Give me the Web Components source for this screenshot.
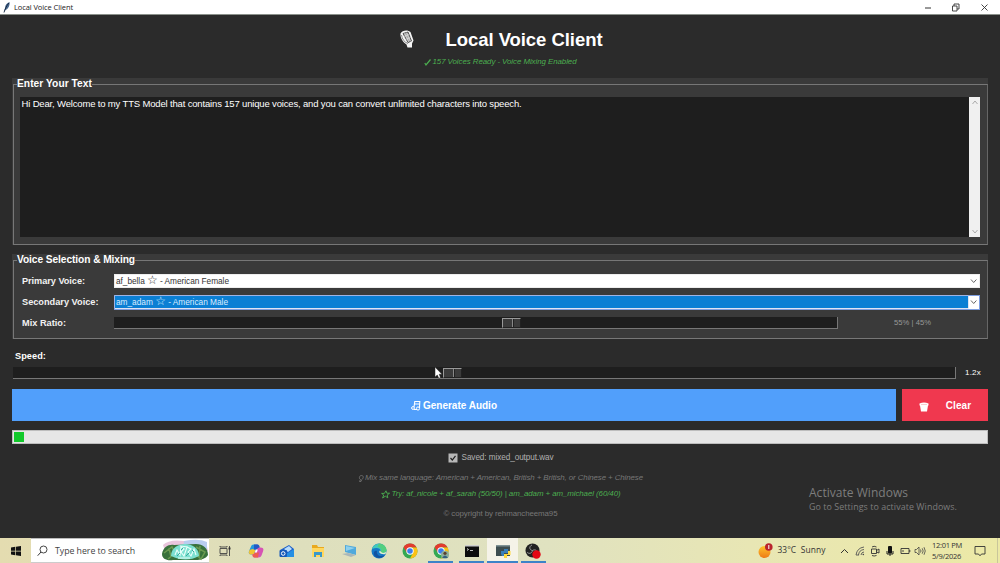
<!DOCTYPE html>
<html lang="en">
<head>
<meta charset="utf-8">
<title>Local Voice Client</title>
<style>
    body {
        margin: 0;
        width: 1000px;
        height: 563px;
        overflow: hidden;
        background: #2b2b2b;
        font-family: "Liberation Sans", Arial, sans-serif;
        font-size: 9.5px;
        color: #fff;
    }
</style>
</head>
<body>
<voice-app></voice-app>

<script>
const define = (name, html, setup) => {
    const template = document.createElement('template');
    template.innerHTML = html;
    window.customElements.define(name, class extends HTMLElement {
        constructor() {
            super();
            this.attachShadow({ mode: 'open' });
            this.shadowRoot.appendChild(template.content.cloneNode(true));
        }
        connectedCallback() {
            if (setup) setup(this, this.shadowRoot);
        }
    });
};

// one line of text, spaced out to the width in its "w" attribute
define('fit-text', `<style>
    :host { display: block; white-space: pre; flex: none; line-height: 1.2; }
    span { display: inline-block; }
</style><span><slot></slot></span>`, (el, root) => {
    const w = Number(el.getAttribute('w'));
    const span = root.querySelector('span');
    el.style.width = `${w}px`;
    const chars = Array.from(el.textContent).length;
    span.style.letterSpacing = `${(w - span.getBoundingClientRect().width) / chars}px`;
});

define('title-bar', `<style>
    :host { display: flex; align-items: center; height: 14px; background: #fff; border-bottom: 1px solid #8b918b; flex: none; }
    .feather { margin: 0 3px 0 2px; }
    fit-text { font: 7.5px/14px "Open Sans", sans-serif; color: #222; }
    .buttons { margin-left: auto; display: flex; }
    .buttons svg { width: 28.5px; height: 13px; }
    .buttons { margin-right: 1px; }
</style>
<svg class="feather" width="9" height="12" viewBox="0 0 9 12"><path d="M2 11 3 7C3 4 5 2 7.500 1 8 4 6.500 8 3.500 9Z" fill="#46678f"/><path d="M2 11.500C3 8 4.500 5 6.800 2" stroke="#15263c" stroke-width=".9" fill="none"/></svg>
<fit-text w="59">Local Voice Client</fit-text>
<div class="buttons">
<svg viewBox="0 0 28.5 13"><path d="M11 7h6" stroke="#333" fill="none"/></svg>
<svg viewBox="0 0 28.500 13"><path d="M10.500 5h4.500v5h-4.500zM12 5V3h5v5h-2" stroke="#333" stroke-width=".9" fill="none"/></svg>
<svg viewBox="0 0 28.5 13"><path d="m10.500 3.500 6 6m0-6-6 6" stroke="#333" stroke-width=".9" fill="none"/></svg>
</div>`);

define('app-header', `<style>
    :host { display: flex; flex-direction: column; align-items: center; height: 63px; flex: none; }
    .row { display: flex; align-items: center; height: 21px; margin-top: 13.500px; gap: 30px; padding-left: 1px; }
    .title { font-weight: bold; font-size: 18.500px; line-height: 21px; }
    .sub { display: flex; align-items: center; margin-top: 7.500px; gap: 2px; height: 10px; color: #4caf50; }
    .sub fit-text { font-style: italic; font-size: 7.9px; line-height: 10px; }
</style>
<div class="row">
<svg width="17" height="20" viewBox="0 0 17 20"><path d="M1.500 4.500C3 1 9 .5 11.500 3l3 8.500-1.500 3v4H8.500l-1-3C4 13.500 1 8.500 1.500 4.500Z" fill="#f5f5f5"/><path d="m4 4.500 5-1.500 3.500 9-3.500 1.500Z" fill="#aaa" stroke="#333" stroke-width=".8"/><path d="m5.500 4 4.200 9M7.500 3.500l4 9M5 7.500l5-2M6.500 10.500l5-2" stroke="#eee" stroke-width=".5"/><path d="M2.500 6C3 10 5.500 13.500 9 14.500" stroke="#555" stroke-width=".7" fill="none"/></svg>
<fit-text class="title" w="157">Local Voice Client</fit-text>
</div>
<div class="sub">
<svg width="7" height="9" viewBox="0 0 7 9"><path d="m.8 5 1.200 2L6.500 1.500" stroke="#4caf50" stroke-width="1.200" fill="none"/></svg>
<fit-text w="144">157 Voices Ready - Voice Mixing Enabled</fit-text>
</div>`);

// tk style label frame, the caption sits on the border line
define('label-frame', `<style>
    :host { display: block; background: #3a3a3a; box-sizing: border-box; flex: none; }
    fieldset { margin: 0 0 0 1px; padding: 0; height: 100%; min-width: 0; box-sizing: border-box; border: 1px solid #777; border-right-color: #666; }
    legend { margin: 0 0 0 3px; padding: 0; height: 12px; }
    legend fit-text { font-weight: bold; font-size: 10.2px; line-height: 12px; }
</style>
<fieldset><legend></legend><slot></slot></fieldset>`, (el, root) => {
    const cap = document.createElement('fit-text');
    cap.setAttribute('w', el.getAttribute('w'));
    cap.textContent = el.getAttribute('caption');
    root.querySelector('legend').appendChild(cap);
});

define('text-area', `<style>
    :host { display: flex; height: 140px; background: #1e1e1e; }
    .text { flex: 1; padding: 1px 1.500px; }
    fit-text { font-size: 9.600px; line-height: 12px; color: #eee; }
    .scroll { width: 11px; background: #f0f0f0; display: flex; flex-direction: column; justify-content: space-between; align-items: center; padding: 3px 0; box-sizing: border-box; }
</style>
<div class="text"><slot></slot></div>
<div class="scroll">
<svg width="6" height="5" viewBox="0 0 6 5"><path d="m.500 4 2.500-3 2.500 3" stroke="#aaa" fill="none"/></svg>
<svg width="6" height="5" viewBox="0 0 6 5"><path d="m.500 1 2.500 3 2.500-3" stroke="#aaa" fill="none"/></svg>
</div>`);

define('combo-box', `<style>
    :host { display: flex; align-items: center; width: 866px; height: 14px; box-sizing: border-box; background: #fff; border: 1px solid #eee; color: #333; }
    .value { flex: 1; height: 12px; padding-left: 1px; box-sizing: border-box; display: flex; align-items: center; }
    :host([selected]) { border-color: #7f9fe0; height: 15px; color: #d9edff; }
    :host([selected]) .value { background: #0b7fd4; box-shadow: 0 0 0 .5px #bfc9e8; height: 12px; }
    svg { width: 11px; height: 6px; flex: none; }
</style>
<div class="value"><slot></slot></div>
<svg viewBox="0 0 11 6"><path d="m3 1.500 2.700 3 2.700-3" stroke="#555" stroke-width=".9" fill="none"/></svg>`);

define('scale-bar', `<style>
    :host { display: flex; height: 12px; background: #1e1e1e; border: solid #777; border-width: 0 1px 1px 0; box-sizing: border-box; flex: none; }
    .thumb { width: 19px; height: 10px; margin-top: 1px; box-sizing: border-box; display: flex; background: #3b3b3b; border: solid; border-width: 1px; border-color: #999 #222 #222 #999; }
    .thumb i { width: 8.500px; border-right: 1px solid #888; box-shadow: 1px 0 #222; }
</style>
<div class="thumb"><i></i></div>`, (el, root) => {
    el.style.width = `${el.getAttribute('length')}px`;
    root.querySelector('.thumb').style.marginLeft = `${el.getAttribute('value')}px`;
});

define('voice-row', `<style>
    :host { display: flex; align-items: center; height: 21px; }
    .label { width: 92px; flex: none; }
    .label fit-text { font-weight: bold; font-size: 9.200px; line-height: 12px; color: #f2f2f2; }
</style>
<div class="label"></div><slot></slot>`, (el, root) => {
    root.querySelector('.label').innerHTML = `<fit-text w="${el.getAttribute('w')}">${el.getAttribute('label')}</fit-text>`;
});

define('action-button', `<style>
    :host { display: flex; align-items: center; justify-content: center; height: 32px; padding-top: 1px; box-sizing: border-box; background: var(--bg); font-weight: bold; font-size: 10px; }
</style><slot></slot>`);

define('progress-bar', `<style>
    :host { display: block; height: 14px; box-sizing: border-box; background: #e6e6e6; border: 1px solid #bdbdbd; padding: 1px; }
    i { display: block; width: 10px; height: 10px; background: #12c92b; }
</style><i></i>`);

define('foot-notes', `<style>
    :host { display: flex; flex-direction: column; align-items: center; padding: 8px 0 0 1px; }
    .line { display: flex; align-items: center; height: 12px; }
    fit-text { line-height: 12px; font-size: 7.900px; }
    .saved { gap: 4px; color: #b0b0b0; }
    .saved fit-text { font-size: 8.200px; }
    .mix { margin-top: 8px; color: #777; font-style: italic; gap: 1px; }
    .try { margin-top: 4px; color: #4caf50; font-style: italic; gap: 2px; }
    .copy { margin-top: 7.500px; color: #777; }
</style>
<div class="line saved">
<svg width="10" height="10" viewBox="0 0 10 10"><path d="M.5.5h9v9h-9z" fill="#b8b8b8"/><path d="m2.500 5 1.800 2L7.500 2.800" stroke="#222" stroke-width="1.200" fill="none"/></svg>
<fit-text w="92">Saved: mixed_output.wav</fit-text></div>
<div class="line mix">
<svg width="6" height="9" viewBox="0 0 6 9"><path d="M2.500 5.500C.8 5 1 1.500 3.500 1.500S5.500 4.500 3.800 5.500L3 7.500H1.500Z" stroke="#777" stroke-width=".8" fill="none"/></svg>
<fit-text w="278">Mix same language: American + American, British + British, or Chinese + Chinese</fit-text></div>
<div class="line try">
<svg width="9" height="9" viewBox="0 0 9 9"><path d="m5 .8.8 2.400h2.800L6.200 5l.6 2.800-2.500-1.600L1.600 8l1.100-3L.6 3.400h2.800Z" stroke="#4caf50" stroke-width=".9" fill="none"/></svg>
<fit-text w="229">Try: af_nicole + af_sarah (50/50) | am_adam + am_michael (60/40)</fit-text></div>
<div class="line copy"><fit-text w="114">© copyright by rehmancheema95</fit-text></div>`);

define('activate-note', `<style>
    :host { position: absolute; left: 809px; top: 485.500px; display: block; color: #7d7d7d; font-family: "Open Sans", sans-serif; }
    .big { font-size: 12px; line-height: 14px; }
    .small { font-size: 8.900px; line-height: 14px; }
</style>
<fit-text class="big" w="99">Activate Windows</fit-text>
<fit-text class="small" w="148">Go to Settings to activate Windows.</fit-text>`);

define('mouse-pointer', `<style>
    :host { position: absolute; left: 434px; top: 366px; }
</style>
<svg width="9" height="13" viewBox="0 0 9 13"><path d="M1 1v10l2.300-2 1.500 3.300 1.700-.8L5.200 8.300H8Z" fill="#fff" stroke="#222" stroke-width=".5"/></svg>`);

const chrome = `<circle cx="8" cy="8" r="7.500" fill="#34a853"/><path d="M1.500 4.200A7.500 7.500 0 0 1 14.700 4.600H8L5 9.700Z" fill="#e33b2e"/><path d="M14.700 4.600A7.500 7.500 0 0 1 8 15.500L11.200 9.500 8 4.600Z" fill="#fbc116"/><circle cx="8" cy="8" r="3.700" fill="#fff"/><circle cx="8" cy="8" r="2.800" fill="#3b7ded"/>`;

define('task-bar', `<style>
    :host { display: flex; height: 25px; flex: none; color: #333; font-family: "Open Sans", sans-serif; background: linear-gradient(90deg, #e4dcb0 0, #dedfbd 30%, #e0e2c0 55%, #e8e6b4 75%, #ece9a6 100%); }
    .cell { display: flex; align-items: center; justify-content: center; box-sizing: border-box; height: 25px; }
    .start { width: 31px; }
    .search { width: 178px; background: #fff; display: flex; align-items: center; border-top: 1px solid #bbb; border-bottom: 1px solid #ccc; box-sizing: border-box; padding-left: 6px; margin-right: 1px; }
    .search fit-text { font-size: 8.800px; line-height: 20px; margin: 0 26px 0 7px; color: #444; }
    .app { width: 30.800px; }
    .app svg { width: 16px; height: 16px; }
    .open { border-bottom: 2px solid #3c83c8; padding-top: 2px; margin: 0 2.900px; width: 25px; }
    .now { background: #f5f3e8; margin: 0; width: 30.800px; }
    .weather { display: flex; align-items: center; margin-left: auto; gap: 4px; }
    .weather fit-text { font-size: 8.400px; }
    .tray { display: flex; margin: 0 4px 0 12px; }
    .tray .cell { width: 15.100px; }
    .clock { display: flex; flex-direction: column; justify-content: center; width: 31px; }
    .clock fit-text { font-size: 7.500px; line-height: 11px; }
    .note { width: 35px; border-right: 1px solid #c9c69b; margin-right: 2px; }
</style>
<div class="cell start"><svg width="10" height="10" viewBox="0 0 10 10"><path d="m0 1.500 4.300-.7v3.900H0ZM5 .7 10 0v4.700H5ZM0 5.400h4.300v3.900L0 8.600ZM5 5.400h5V10l-5-.7Z" fill="#111"/></svg></div>
<div class="search">
<svg width="11" height="12" viewBox="0 0 11 12"><circle cx="6.500" cy="4.500" r="3.500" stroke="#333" stroke-width=".9" fill="none"/><path d="M4 7 .7 10.700" stroke="#333"/></svg>
<fit-text w="80">Type here to search</fit-text>
<svg width="48" height="23" viewBox="0 0 48 23"><path d="M2 6Q8 0 23 2T45 3l2 9H4Z" fill="#e9c5dc"/><path d="M23 2Q38-1 46 3v7H22Z" fill="#b9cdef"/><path d="M1 15C2 8 8 5 13 6l22-1c7 0 12 4 12 11-2 4-8 5-12 5H12C6 22 1 20 1 15Z" fill="#38713b"/><path d="m3 14 8-6 3 6-7 6M35 8l9 5-4 7-6-5M8 9l2 9M39 7l-1 12" stroke="#6a9a50" stroke-width="1.500" fill="none"/><path d="M10 17C10 9 17 5 24 5s14 4 14 12q-13 7-28 0Z" fill="#7ce0d0"/><path d="m14 16 2-5 3 5 1-8 3 2-3 3 3 4 3-9 4 2-3 3 3 4 3-7 2 6M17 19h12M19 7l8 1" stroke="#e9fffa" stroke-width="1.100" fill="none"/><path d="m16 17 3-3m6 3 3-3m-8-3 2-2m9 2 2 2" stroke="#3ba99e"/></svg>
</div>
<div class="cell app"><svg viewBox="0 0 16 16"><path d="M3 5.500h7v5H3zM3 3v1h7V3M3 13v-1h7v1M12.500 3v10" stroke="#444" stroke-width=".9" fill="none"/><path d="M11.500 4.500h2v2h-2z" fill="#333"/></svg></div>
<div class="cell app"><svg viewBox="0 0 16 16"><path d="M5.500 1.500h4q1.500 0 2 2l-2 1-3 7H3.500C0 11.500.5 9 1.500 7L3 3.500Q3.500 1.500 5.500 1.500Z" fill="#2598dd"/><path d="m1.500 7 3-1 3 1-1.500 4.500H3.500C.5 11.500.5 9.500 1.500 7Z" fill="#f2c232"/><path d="M8.500 1.500q2.500 0 3 3h1q4 0 2.500 4l-1.500 4q-.7 2-3 2h-4q-2 0-2-3 2 0 2.500-2l2-5Z" fill="#d653b4"/><path d="M6 1.500h3q2.500 0 2.500 3-2 0-2.500 2H6Z" fill="#2459c5"/><path d="M4.500 11.500q2 0 2.500-2h4l-1 5H6.500q-2 0-2-3Z" fill="#ee5c50"/><path d="m6.800 9.500 1-3h2l-1 3Z" fill="#fff"/></svg></div>
<div class="cell app"><svg viewBox="0 0 16 16"><path d="m1 7 9-5 5 4v8H1Z" fill="#1d60c9"/><path d="m5 6 5-3 3 3-4 3Z" fill="#b9dcfa"/><path d="m15 6-8 5v3h8Z" fill="#258fe3"/><rect x=".5" y="7" width="7.500" height="7" rx="1" fill="#1559b9"/><circle cx="4.200" cy="10.500" r="1.800" stroke="#fff" fill="none"/></svg></div>
<div class="cell app"><svg viewBox="0 0 16 16"><path d="M2 2h5l1 2h6v10H2Z" fill="#e9a91e"/><path d="M2 5h12v9H2Z" fill="#ffd75e"/><path d="M4 9h8v5h-2v-2H6v2H4Z" fill="#3b98c9"/></svg></div>
<div class="cell app"><svg viewBox="0 0 16 16"><path d="m4 2 11 2v8L4 9Z" fill="#4fa9dc"/><path d="m5 3 9 2-9 3Z" fill="#8ed0ee"/><path d="m1 11 6-1 8 2-5 2Z" fill="#a9b7b9"/></svg></div>
<div class="cell app"><svg viewBox="0 0 16 16"><circle cx="8" cy="8" r="7.500" fill="#1679c7"/><path d="M1 6C3-1 14-1 15.500 7c0 4-5 4-6 2 1-4-4-5-8.500-3Z" fill="#43c8bc"/><path d="M8 .5c5 0 8 4 7.500 7-1 3-5 3-6 1.500 2-3-1-5-3-5Z" fill="#5bd25e" opacity=".65"/><path d="M6 8c-1 4 3 6.500 8 4-3 4-9 4-11 0-1-3 1-5 3-4Z" fill="#1354a1"/><path d="M9 7.500C7 9 9 12 14.500 11l1-2.500c-2 2-5 2-6.500-1Z" fill="#e3eed2"/></svg></div>
<div class="cell app"><svg viewBox="0 0 16 16">${chrome}</svg></div>
<div class="cell app open"><svg viewBox="0 0 16 16">${chrome}<circle cx="12" cy="11.800" r="4" fill="#8cae9b"/><circle cx="12" cy="10.300" r="1.600" fill="#5b4030"/><path d="M9 15q3-5 6 0" fill="#345f80"/></svg></div>
<div class="cell app open"><svg viewBox="0 0 16 16"><path d="M1 2h14v12H1z" fill="#0d0d0d"/><path d="M1 2h14v1.500H1z" fill="#ccc"/><path d="m3 5.500 1.500 1L3 7.500M6 7.500h3" stroke="#eee" stroke-width=".8" fill="none"/></svg></div>
<div class="cell app open now"><svg viewBox="0 0 16 16"><path d="M1 2h14v11H1z" fill="#3d4d50"/><path d="M1 2h14v1.500H1z" fill="#809396"/><path d="M6 11V8h3V6h4v4H9v3H7Z" fill="#397eb8"/><path d="M13 8h2.500v4H12v3H9v-4h4Z" fill="#ffd83d"/></svg></div>
<div class="cell app open"><svg viewBox="0 0 16 16"><circle cx="7.500" cy="7.500" r="7" fill="#222"/><path d="M7.500 7.500C4 7 4 3 7 2M7.500 7.500c3-2 6 1 4 4M7.500 7.500C7 11 3 11 2 9" stroke="#999" stroke-width="1" fill="none"/><circle cx="11.500" cy="11.500" r="4.200" fill="#e30613"/></svg></div>
<div class="weather">
<svg width="15" height="16" viewBox="0 0 15 16"><defs><linearGradient id="sun" x2="0" y2="1"><stop stop-color="#ffc32b"/><stop offset="1" stop-color="#ee7a16"/></linearGradient></defs><circle cx="6.500" cy="9" r="6" fill="url(#sun)"/><circle cx="10.800" cy="4" r="3.800" fill="#b9232d"/><path d="M10.800 2v4" stroke="#fff"/></svg>
<fit-text w="48">33°C  Sunny</fit-text></div>
<div class="tray">
<div class="cell"><svg width="9" height="6" viewBox="0 0 9 6"><path d="m1 5 3.500-3.500L8 5" stroke="#333" fill="none"/></svg></div>
<div class="cell"><svg width="10" height="10" viewBox="0 0 10 10"><path d="M1 9Q2 2 9 1M3.500 9Q4 4 9 3.500M6 9q.500-3 3-3M1 9h3" stroke="#555" stroke-width=".9" fill="none"/><circle cx="8.300" cy="8.500" r=".8" fill="#444"/></svg></div>
<div class="cell"><svg width="10" height="12" viewBox="0 0 10 12"><path d="M1.500 4h5v4.500h-5zM6.500 5.500 9 4v4L6.500 7M2 2q2-1.500 4.500 0M2 10.500q2 1 4.500 0" stroke="#333" stroke-width=".9" fill="none"/></svg></div>
<div class="cell"><svg width="8" height="12" viewBox="0 0 8 12"><rect x="2" y="1" width="4" height="7.500" rx="1" fill="#111"/><path d="M1 6v3h6V6M4 9v2" stroke="#222" fill="none"/></svg></div>
<div class="cell"><svg width="11" height="8" viewBox="0 0 11 8"><path d="M1 1.500h8v5H1zM9.800 3v2M3 3v2" stroke="#333" stroke-width=".9" fill="none"/></svg></div>
<div class="cell"><svg width="12" height="10" viewBox="0 0 12 10"><path d="M1 3.500h1.500L5 1v8L2.500 6.500H1zM6.500 3.500q1 1.500 0 3M8.200 2.300q2 2.700 0 5.400M10 1.200q2.500 3.800 0 7.600" stroke="#444" stroke-width=".8" fill="none"/></svg></div>
</div>
<div class="clock"><fit-text w="30">12:01 PM</fit-text><fit-text w="29">5/9/2026</fit-text></div>
<div class="cell note"><svg width="12" height="12" viewBox="0 0 12 12"><path d="M1 1.500h10v7.500H7.500L6 10.800 4.500 9H1z" stroke="#333" stroke-width=".9" fill="none"/></svg></div>`);

define('voice-app', `<style>
    :host { display: flex; flex-direction: column; height: 563px; position: relative; }
    main { flex: 1; display: flex; flex-direction: column; padding: 0 12px; min-height: 0; }
    .text { height: 167px; }
    .voices { height: 85px; margin-top: 9px; }
    text-area { margin: 7px 7px 0 6px; }
    .rows { display: block; padding: 4.500px 0 0 8px; }
    combo-box fit-text { font-size: 8.300px; line-height: 12px; }
    .ratio { font-size: 7.600px; color: #999; margin-left: 56px; }
    .speed { font-weight: bold; font-size: 9.200px; line-height: 12px; margin: 10.500px 0 5px 3px; }
    .slider { display: flex; align-items: center; gap: 9px; height: 12px; padding-left: 1px; }
    .slider fit-text { font-size: 8px; }
    .buttons { display: grid; grid-template-columns: 884px 86px; gap: 6px; margin-top: 10.500px; width: 976px; }
    .buttons svg { flex: none; }
    progress-bar { margin-top: 9px; flex: none; }
    .star { font-family: "DejaVu Sans", sans-serif; font-size: 12px; line-height: 1px; }
</style>
<title-bar></title-bar>
<main>
    <app-header></app-header>
    <label-frame class="text" caption="Enter Your Text" w="75">
        <text-area><fit-text w="500">Hi Dear, Welcome to my TTS Model that contains 157 unique voices, and you can convert unlimited characters into speech.</fit-text></text-area>
    </label-frame>
    <label-frame class="voices" caption="Voice Selection &amp; Mixing" w="118">
        <div class="rows">
            <voice-row label="Primary Voice:" w="63"><combo-box><fit-text w="113">af_bella <span class="star">☆</span> - American Female</fit-text></combo-box></voice-row>
            <voice-row label="Secondary Voice:" w="76.5"><combo-box selected><fit-text w="112">am_adam <span class="star">☆</span> - American Male</fit-text></combo-box></voice-row>
            <voice-row label="Mix Ratio:" w="44"><scale-bar length="724" value="388"></scale-bar><fit-text class="ratio" w="37">55% | 45%</fit-text></voice-row>
        </div>
    </label-frame>
    <fit-text class="speed" w="31">Speed:</fit-text>
    <div class="slider"><scale-bar length="943" value="430"></scale-bar><fit-text w="16">1.2x</fit-text></div>
    <div class="buttons">
        <action-button style="--bg: #519ffb">
            <svg width="10" height="11" viewBox="0 0 10 11"><path d="m3 7 .8-5.500h5L8.500 8M3.500 4h5" stroke="#fff" stroke-width="1.100" fill="none"/><circle cx="2" cy="8" r="1.400" stroke="#fff" fill="none"/><circle cx="7" cy="8.500" r="1.600" stroke="#fff" fill="none"/><path d="M3 9.500h3" stroke="#fff"/></svg>
            <fit-text w="74" style="margin-left: 2px">Generate Audio</fit-text>
        </action-button>
        <action-button style="--bg: #f0384f">
            <svg width="10" height="10" viewBox="0 0 10 10" style="margin-top: 2px"><path d="M.5 1.500Q5-.5 9.500 1.500v2H.5ZM1 3.500h8L8 9.500H2Z" fill="#fff"/><path d="M2 2.500h6" stroke="#f7a9b1" stroke-width=".6"/></svg>
            <fit-text w="25.5" style="margin-left: 17px">Clear</fit-text>
        </action-button>
    </div>
    <progress-bar></progress-bar>
    <foot-notes></foot-notes>
</main>
<task-bar></task-bar>
<activate-note></activate-note>
<mouse-pointer></mouse-pointer>`);
</script>
</body>
</html>
